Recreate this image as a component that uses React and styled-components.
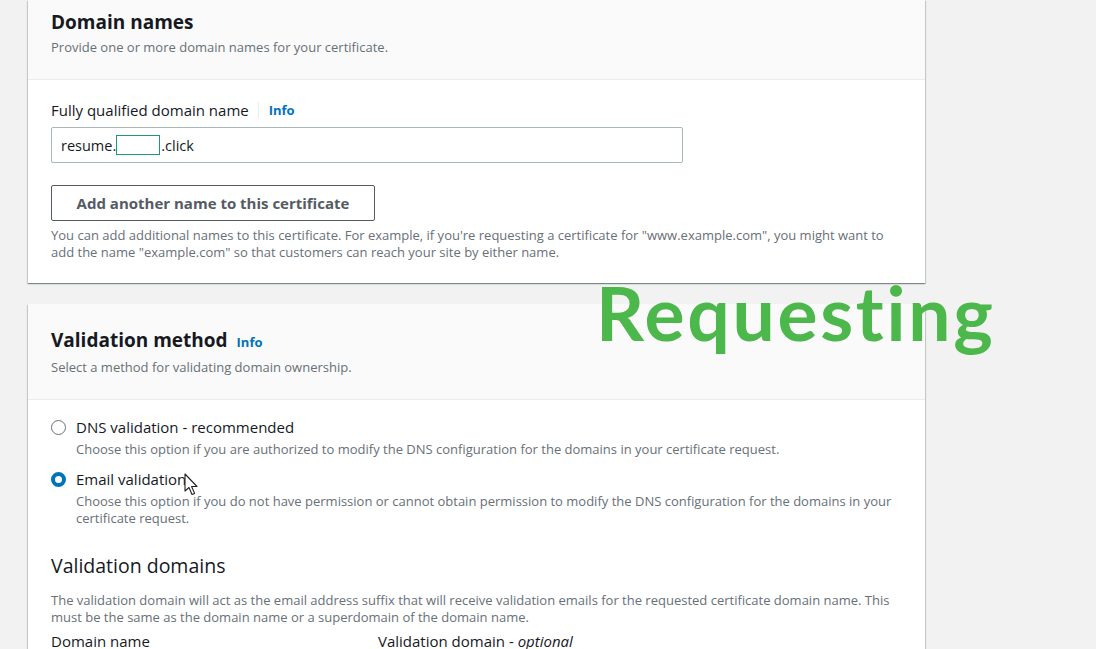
import React from 'react';
import styled, { createGlobalStyle } from 'styled-components';

const GlobalStyle = createGlobalStyle`
  html, body {
    margin: 0;
    padding: 0;
    background: #f2f2f2;
    font-family: "Open Sans", "Noto Sans", Arial, sans-serif;
    color: #16191f;
  }
`;

const Page = styled.div`
  position: relative;
  width: 1096px;
  height: 649px;
  overflow: hidden;
  padding-left: 28px;
  box-sizing: border-box;
`;

const Card = styled.section`
  width: 897px;
  background: #fff;
  box-shadow: 0 1px 1px 0 rgba(0, 28, 36, 0.3), 1px 1px 1px 0 rgba(0, 28, 36, 0.15), -1px 1px 1px 0 rgba(0, 28, 36, 0.15);
  margin-top: ${(p) => p.$gap || 0}px;
`;

const CardHeader = styled.div`
  background: #fafafa;
  border-bottom: 1px solid #eaeded;
  padding: ${(p) => p.$top}px 23px 22px;
`;

const Title = styled.h2`
  margin: 0;
  font-size: 19px;
  line-height: 28px;
  font-weight: 700;
  color: #16191f;
  display: flex;
  align-items: baseline;
  gap: 9px;
`;

const Sub = styled.p`
  margin: 2px 0 0;
  font-size: 13px;
  line-height: 19px;
  color: #687078;
`;

const InfoLink = styled.span`
  font-size: 13px;
  font-weight: 700;
  color: #0073bb;
`;

const CardBody = styled.div`
  padding: ${(p) => p.$top || 20}px 23px ${(p) => p.$bottom || 22}px;
`;

const FieldLabel = styled.div`
  display: flex;
  align-items: center;
  font-size: 15px;
  line-height: 20px;
  color: #16191f;
`;

const Divider = styled.span`
  width: 1px;
  height: 16px;
  background: #eaeded;
  margin: 0 10px 0 9px;
`;

const Input = styled.div`
  margin-top: 7px;
  width: 632px;
  height: 36px;
  box-sizing: border-box;
  border: 1px solid #aab7b8;
  border-radius: 2px;
  display: flex;
  align-items: center;
  padding: 0 9px;
  font-size: 14.5px;
  color: #16191f;
`;

const Redacted = styled.span`
  display: inline-block;
  width: 44px;
  height: 20px;
  box-sizing: border-box;
  border: 1.5px solid #1d9a72;
  margin: 0 1px 0 0;
`;

const Button = styled.button`
  margin-top: 22px;
  height: 36px;
  width: 324px;
  background: #fff;
  border: 1px solid #545b64;
  border-radius: 2px;
  font-family: inherit;
  font-size: 15px;
  font-weight: 700;
  color: #545b64;
  padding: 0 16px;
`;

const Help = styled.p`
  margin: ${(p) => p.$mt || 6}px 0 0;
  font-size: 13px;
  line-height: 17px;
  color: #687078;
  max-width: ${(p) => p.$max || 851}px;
`;

const Option = styled.div`
  display: grid;
  grid-template-columns: 16px 1fr;
  column-gap: 9px;
  margin-top: ${(p) => p.$mt || 0}px;
`;

const Radio = styled.span`
  width: 15px;
  height: 15px;
  margin-top: 3px;
  border-radius: 50%;
  box-sizing: border-box;
  border: ${(p) => (p.$checked ? '4.5px solid #0073bb' : '1.5px solid #687078')};
  background: #fff;
`;

const OptionLabel = styled.div`
  font-size: 15px;
  line-height: 20px;
  color: #16191f;
`;

const OptionDesc = styled.div`
  grid-column: 2;
  font-size: 13px;
  line-height: 17px;
  color: #687078;
  margin-top: 4px;
  max-width: 830px;
`;

const SubTitle = styled.h3`
  margin: 27px 0 0;
  font-size: 19.5px;
  line-height: 24px;
  font-weight: 400;
  color: #16191f;
`;

const Columns = styled.div`
  display: grid;
  grid-template-columns: 327px 1fr;
  margin-top: 5px;
  font-size: 15px;
  line-height: 20px;
  color: #16191f;
  em {
    font-style: italic;
  }
`;

const Overlay = styled.div`
  position: absolute;
  left: 596px;
  top: 262px;
  font-family: Lato, "Open Sans", sans-serif;
  font-weight: 700;
  font-size: 75px;
  line-height: 100px;
  color: #4cb84c;
  letter-spacing: 2.7px;
`;

const Cursor = styled.svg`
  position: absolute;
  left: 184px;
  top: 473px;
`;

export default function App() {
  return (
    <Page>
      <GlobalStyle />
      <Card>
        <CardHeader $top={8}>
          <Title>Domain names</Title>
          <Sub>Provide one or more domain names for your certificate.</Sub>
        </CardHeader>
        <CardBody $top={20} $bottom={22}>
          <FieldLabel>
            Fully qualified domain name
            <Divider />
            <InfoLink>Info</InfoLink>
          </FieldLabel>
          <Input>
            resume.<Redacted />.click
          </Input>
          <Button>Add another name to this certificate</Button>
          <Help>
            You can add additional names to this certificate. For example, if you're requesting a certificate for "www.example.com", you might want to add the name "example.com" so that customers can reach your site by either name.
          </Help>
        </CardBody>
      </Card>

      <Card $gap={21}>
        <CardHeader $top={22}>
          <Title>
            Validation method <InfoLink>Info</InfoLink>
          </Title>
          <Sub>Select a method for validating domain ownership.</Sub>
        </CardHeader>
        <CardBody $top={17}>
          <Option>
            <Radio />
            <OptionLabel>DNS validation - recommended</OptionLabel>
            <OptionDesc>
              Choose this option if you are authorized to modify the DNS configuration for the domains in your certificate request.
            </OptionDesc>
          </Option>
          <Option $mt={11}>
            <Radio $checked />
            <OptionLabel>Email validation</OptionLabel>
            <OptionDesc>
              Choose this option if you do not have permission or cannot obtain permission to modify the DNS configuration for the domains in your certificate request.
            </OptionDesc>
          </Option>
          <SubTitle>Validation domains</SubTitle>
          <Help $mt={14}>
            The validation domain will act as the email address suffix that will receive validation emails for the requested certificate domain name. This must be the same as the domain name or a superdomain of the domain name.
          </Help>
          <Columns>
            <span>Domain name</span>
            <span>
              Validation domain - <em>optional</em>
            </span>
          </Columns>
        </CardBody>
      </Card>

      <Overlay>Requesting</Overlay>
      <Cursor width="16" height="24" viewBox="0 0 16 24">
        <path
          d="M1 1 L1 18 L5 14.5 L8 21.5 L10.6 20.4 L7.6 13.5 L13 13.5 Z"
          fill="#fff"
          stroke="#222"
          strokeWidth="1.1"
          strokeLinejoin="round"
        />
      </Cursor>
    </Page>
  );
}
